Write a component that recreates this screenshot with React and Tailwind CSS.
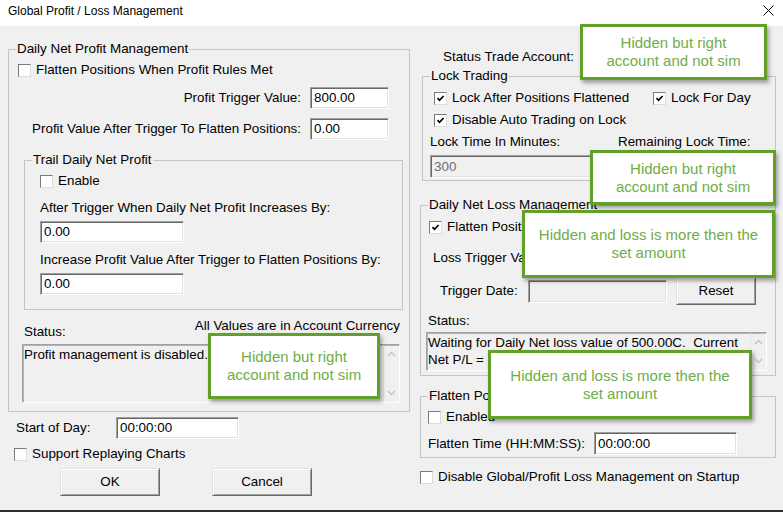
import React from "react";

// ---------- small win32-style controls ----------

const CheckBox = ({ checked }) => (
  <span className="w-[13px] h-[13px] shrink-0 bg-white border border-t-[#7a7a7a] border-l-[#7a7a7a] border-r-[#dcdcdc] border-b-[#dcdcdc] flex items-center justify-center">
    {checked && (
      <svg width="9" height="9" viewBox="0 0 9 9">
        <polyline points="1.5,4.2 3.5,6.3 7.6,2" fill="none" stroke="#000" strokeWidth="1.7" />
      </svg>
    )}
  </span>
);

const CheckRow = ({ label, checked, className = "" }) => (
  <div className={`flex items-center h-[18px] gap-[5px] ${className}`}>
    <CheckBox checked={checked} />
    <span className="whitespace-nowrap">{label}</span>
  </div>
);

const TextBox = ({ value, disabled, className = "" }) => (
  <div
    className={`h-[22px] flex items-center pl-[3px] border border-t-[#a0a0a0] border-l-[#a0a0a0] border-r-white border-b-white shadow-[inset_1px_1px_0_#696969,inset_-1px_-1px_0_#e3e3e3] ${
      disabled ? "bg-[#f0f0f0] text-[#6d6d6d]" : "bg-white"
    } ${className}`}
  >
    {value}
  </div>
);

const Button = ({ label, className = "w-[100px]" }) => (
  <div
    className={`h-[28px] flex items-center justify-center bg-[#f0f0f0] border border-t-[#e3e3e3] border-l-[#e3e3e3] border-r-[#696969] border-b-[#696969] shadow-[inset_1px_1px_0_#fff,inset_-1px_-1px_0_#a0a0a0] ${className}`}
  >
    {label}
  </div>
);

const GroupBox = ({ title, className = "", children }) => (
  <fieldset className={`border border-[#c4c4c4] ${className}`}>
    <legend className="ml-[7px] px-[1px] leading-[16px]">{title}</legend>
    {children}
  </fieldset>
);

const Chevron = ({ up }) => (
  <svg width="9" height="6" viewBox="0 0 9 6">
    <polyline
      points={up ? "1,5 4.5,1.5 8,5" : "1,1 4.5,4.5 8,1"}
      fill="none"
      stroke="#c2c2c2"
      strokeWidth="1.4"
    />
  </svg>
);

// read-only multi line status box with a greyed out scrollbar
const StatusBox = ({ className = "", children }) => (
  <div
    className={`flex bg-[#f0f0f0] border border-t-[#a0a0a0] border-l-[#a0a0a0] border-r-white border-b-white shadow-[inset_1px_1px_0_#b4b4b4] ${className}`}
  >
    <div className="flex-1 pl-[1px] pt-[1px] leading-[17px] overflow-hidden">{children}</div>
    <div className="w-[16px] border-l border-[#e4e4e4] flex flex-col items-center justify-between py-[6px]">
      <Chevron up />
      <Chevron />
    </div>
  </div>
);

const Callout = ({ className = "", lines }) => (
  <div
    className={`absolute bg-white border-[3px] border-[#63a02a] shadow-[2px_3px_4px_rgba(0,0,0,0.35)] flex flex-col items-center justify-center text-[15px] leading-[18px] text-[#6fad46] ${className}`}
  >
    {lines.map((l) => (
      <span key={l}>{l}</span>
    ))}
  </div>
);

export default function App() {
  return (
    <div className="w-[783px] h-[512px] bg-[#f0f0f0] flex flex-col relative overflow-hidden font-['Liberation_Sans',Arial,sans-serif] text-[13.4px] leading-[16px] text-black">
      {/* title bar */}
      <div className="h-[26px] bg-white flex items-start justify-between shrink-0">
        <span className="ml-[8px] mt-[4px] text-[12px] leading-[14px]">Global Profit / Loss Management</span>
        <svg className="mr-[9px] mt-[5px]" width="11" height="11" viewBox="0 0 11 11">
          <path d="M0.5 0.5 L10.5 10.5 M10.5 0.5 L0.5 10.5" stroke="#000" strokeWidth="1" />
        </svg>
      </div>

      <div className="flex flex-1">
        {/* left column */}
        <div className="ml-[8px] w-[402px] flex flex-col">
          <GroupBox title="Daily Net Profit Management" className="mt-[15px] pb-[8px]">
            <CheckRow className="mt-[4px] ml-[9px]" label="Flatten Positions When Profit Rules Met" />
            <div className="mt-[8px] flex justify-end items-center gap-[9px] pr-[20px]">
              <span>Profit Trigger Value:</span>
              <TextBox className="w-[79px]" value="800.00" />
            </div>
            <div className="mt-[9px] flex justify-end items-center gap-[9px] pr-[20px]">
              <span className="whitespace-nowrap">Profit Value After Trigger To Flatten Positions:</span>
              <TextBox className="w-[79px]" value="0.00" />
            </div>

            <GroupBox title="Trail Daily Net Profit" className="mt-[12px] ml-[15px] mr-[6px] pb-[14px]">
              <CheckRow className="mt-[4px] ml-[15px]" label="Enable" />
              <div className="mt-[10px] ml-[15px]">After Trigger When Daily Net Profit Increases By:</div>
              <TextBox className="mt-[5px] ml-[15px] w-[144px]" value="0.00" />
              <div className="mt-[9px] ml-[15px] whitespace-nowrap">Increase Profit Value After Trigger to Flatten Positions By:</div>
              <TextBox className="mt-[5px] ml-[15px] w-[144px]" value="0.00" />
            </GroupBox>

            <div className="mt-[8px] h-[22px] flex justify-between items-start pl-[15px] pr-[9px]">
              <span className="mt-[6px]">Status:</span>
              <span>All Values are in Account Currency</span>
            </div>
            <StatusBox className="mt-[4px] ml-[13px] w-[378px] h-[59px]">
              Profit management is disabled.
            </StatusBox>
          </GroupBox>

          <div className="mt-[5px] flex items-center h-[22px]">
            <span className="ml-[8px] w-[100px]">Start of Day:</span>
            <TextBox className="w-[123px]" value="00:00:00" />
          </div>
          <CheckRow className="mt-[6px] ml-[6px]" label="Support Replaying Charts" />
          <div className="mt-[5px] flex ml-[52px] gap-[52px]">
            <Button label="OK" />
            <Button label="Cancel" />
          </div>
        </div>

        {/* right column */}
        <div className="ml-[10px] w-[356px] flex flex-col">
          <div className="mt-[23px] ml-[23px]">Status Trade Account:</div>

          <GroupBox title="Lock Trading" className="mt-[3px] ml-[2px] pb-[2px]">
            <div className="mt-[5px] flex pl-[11px]">
              <CheckRow className="w-[219px]" label="Lock After Positions Flattened" checked />
              <CheckRow label="Lock For Day" checked />
            </div>
            <CheckRow className="mt-[4px] ml-[11px]" label="Disable Auto Trading on Lock" checked />
            <div className="mt-[5px] flex pl-[7px]">
              <span className="w-[188px]">Lock Time In Minutes:</span>
              <span>Remaining Lock Time:</span>
            </div>
            <TextBox className="mt-[5px] ml-[7px] w-[165px] h-[23px]" value="300" disabled />
          </GroupBox>

          <GroupBox title="Daily Net Loss Management" className="mt-[16px] pb-[4px]">
            <CheckRow className="mt-[5px] ml-[8px]" label="Flatten Positions When Loss Rules Met" checked />
            <div className="mt-[11px] flex items-center h-[22px] pl-[12px]">
              <span className="w-[120px] whitespace-nowrap">Loss Trigger Value:</span>
              <TextBox className="w-[120px]" value="500.00" />
            </div>
            <div className="mt-[8px] flex items-center pl-[19px]">
              <span className="w-[88px]">Trigger Date:</span>
              <TextBox className="w-[139px] h-[23px]" value="" disabled />
              <Button className="ml-[9px] w-[80px]" label="Reset" />
            </div>
            <div className="mt-[8px] ml-[7px]">Status:</div>
            <StatusBox className="mt-[3px] ml-[5px] w-[341px] h-[39px]">
              <div className="whitespace-nowrap">Waiting for Daily Net loss value of 500.00C.&nbsp; Current</div>
              <div>Net P/L = -</div>
            </StatusBox>
          </GroupBox>

          <GroupBox title="Flatten Positions at Time" className="mt-[12px] pb-[2px]">
            <CheckRow className="mt-[4px] ml-[7px]" label="Enabled" />
            <div className="mt-[6px] flex items-center pl-[7px]">
              <span className="w-[166px]">Flatten Time (HH:MM:SS):</span>
              <TextBox className="w-[143px] h-[23px]" value="00:00:00" />
            </div>
          </GroupBox>

          <CheckRow className="mt-[10px]" label="Disable Global/Profit Loss Management on Startup" />
        </div>
      </div>

      <div className="h-[2px] bg-[#2b3236] shrink-0" />

      {/* annotation boxes laid over the dialog */}
      <Callout className="left-[580px] top-[24px] w-[187px] h-[56px]" lines={["Hidden but right", "account and not sim"]} />
      <Callout className="left-[590px] top-[150px] w-[186px] h-[55px]" lines={["Hidden but right", "account and not sim"]} />
      <Callout className="left-[522px] top-[210px] w-[253px] h-[68px]" lines={["Hidden and loss is more then the", "set amount"]} />
      <Callout className="left-[488px] top-[350px] w-[264px] h-[69px]" lines={["Hidden and loss is more then the", "set amount"]} />
      <Callout className="left-[208px] top-[333px] w-[172px] h-[66px]" lines={["Hidden but right", "account and not sim"]} />
    </div>
  );
}
